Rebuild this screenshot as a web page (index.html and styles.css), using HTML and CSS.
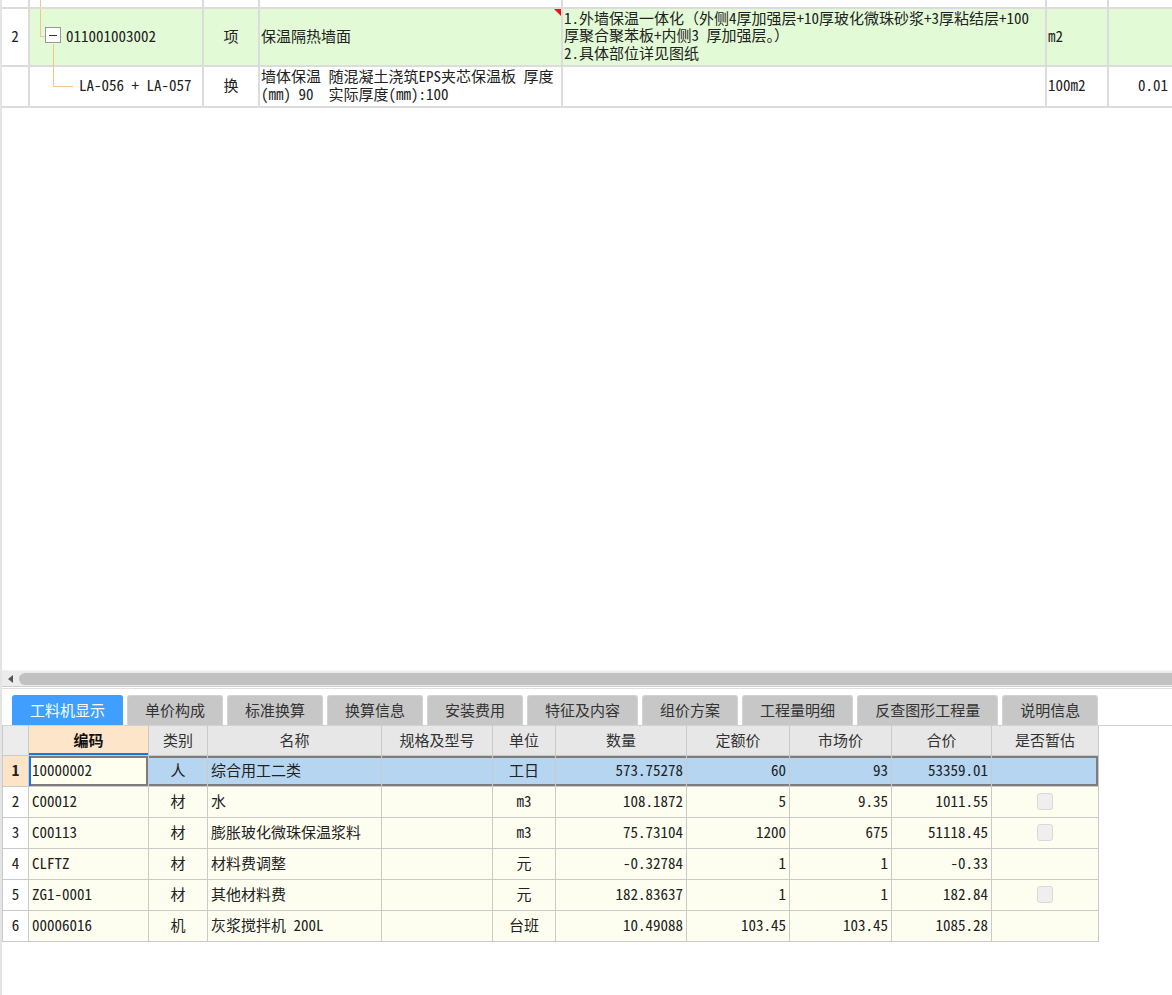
FILE: index.html
```html
<!DOCTYPE html>
<html lang="zh-CN">
<head>
<meta charset="utf-8">
<title>工料机显示</title>
<link rel="stylesheet" href="styles.css">
</head>
<body>
<div class="app">
  <section class="upper">
    <div class="top">
      <div class="c num r0"></div>
      <div class="c tree r0"><span class="tl v0"></span></div>
      <div class="c type r0"></div>
      <div class="c name r0"><span class="peek">实际厚度(mm):80</span></div>
      <div class="c desc r0"></div>
      <div class="c unit r0"></div>
      <div class="c qty r0"></div>

      <div class="c num">2</div>
      <div class="c tree g lvl1"><span class="tl v1"></span><span class="tl h1"></span><span class="tl v2"></span><span class="toggle"></span><span class="code">011001003002</span></div>
      <div class="c type g">项</div>
      <div class="c name g flag">保温隔热墙面</div>
      <div class="c desc g"><div class="ml">1.外墙保温一体化（外侧4厚加强层+10厚玻化微珠砂浆+3厚粘结层+100<br>厚聚合聚苯板+内侧3 厚加强层。）<br>2.具体部位详见图纸</div></div>
      <div class="c unit g">m2</div>
      <div class="c qty g"></div>

      <div class="c num"></div>
      <div class="c tree lvl2"><span class="tl v3"></span><span class="tl h3"></span><span class="code">LA-056 + LA-057</span></div>
      <div class="c type">换</div>
      <div class="c name"><div class="ml">墙体保温 随混凝土浇筑EPS夹芯保温板 厚度<br>(mm) 90  实际厚度(mm):100</div></div>
      <div class="c desc"></div>
      <div class="c unit">100m2</div>
      <div class="c qty">0.01</div>
    </div>
  </section>

  <div class="hscroll"><span class="arrow"></span><span class="thumb"></span></div>
  <div class="sep"></div>

  <section class="lower">
    <nav class="tabs">
      <span class="tab active">工料机显示</span>
      <span class="tab">单价构成</span>
      <span class="tab">标准换算</span>
      <span class="tab">换算信息</span>
      <span class="tab">安装费用</span>
      <span class="tab">特征及内容</span>
      <span class="tab">组价方案</span>
      <span class="tab">工程量明细</span>
      <span class="tab">反查图形工程量</span>
      <span class="tab">说明信息</span>
    </nav>
    <table class="res">
      <colgroup>
        <col class="w1"><col class="w2"><col class="w3"><col class="w4"><col class="w5"><col class="w6"><col class="w7"><col class="w8"><col class="w9"><col class="w10"><col class="w11">
      </colgroup>
      <thead>
        <tr>
          <th class="rn"></th>
          <th class="cur">编码</th>
          <th>类别</th>
          <th>名称</th>
          <th>规格及型号</th>
          <th>单位</th>
          <th>数量</th>
          <th>定额价</th>
          <th>市场价</th>
          <th>合价</th>
          <th>是否暂估</th>
        </tr>
      </thead>
      <tbody>
        <tr class="sel">
          <td class="rn">1</td>
          <td class="code focus">10000002</td>
          <td class="ctr">人</td>
          <td>综合用工二类</td>
          <td></td>
          <td class="ctr">工日</td>
          <td class="n">573.75278</td>
          <td class="n">60</td>
          <td class="n">93</td>
          <td class="n">53359.01</td>
          <td class="last"></td>
        </tr>
        <tr>
          <td class="rn">2</td>
          <td class="code">C00012</td>
          <td class="ctr">材</td>
          <td>水</td>
          <td></td>
          <td class="ctr">m3</td>
          <td class="n">108.1872</td>
          <td class="n">5</td>
          <td class="n">9.35</td>
          <td class="n">1011.55</td>
          <td class="ctr"><span class="chk"></span></td>
        </tr>
        <tr>
          <td class="rn">3</td>
          <td class="code">C00113</td>
          <td class="ctr">材</td>
          <td>膨胀玻化微珠保温浆料</td>
          <td></td>
          <td class="ctr">m3</td>
          <td class="n">75.73104</td>
          <td class="n">1200</td>
          <td class="n">675</td>
          <td class="n">51118.45</td>
          <td class="ctr"><span class="chk"></span></td>
        </tr>
        <tr>
          <td class="rn">4</td>
          <td class="code">CLFTZ</td>
          <td class="ctr">材</td>
          <td>材料费调整</td>
          <td></td>
          <td class="ctr">元</td>
          <td class="n">-0.32784</td>
          <td class="n">1</td>
          <td class="n">1</td>
          <td class="n">-0.33</td>
          <td></td>
        </tr>
        <tr>
          <td class="rn">5</td>
          <td class="code">ZG1-0001</td>
          <td class="ctr">材</td>
          <td>其他材料费</td>
          <td></td>
          <td class="ctr">元</td>
          <td class="n">182.83637</td>
          <td class="n">1</td>
          <td class="n">1</td>
          <td class="n">182.84</td>
          <td class="ctr"><span class="chk"></span></td>
        </tr>
        <tr>
          <td class="rn">6</td>
          <td class="code">00006016</td>
          <td class="ctr">机</td>
          <td>灰浆搅拌机 200L</td>
          <td></td>
          <td class="ctr">台班</td>
          <td class="n">10.49088</td>
          <td class="n">103.45</td>
          <td class="n">103.45</td>
          <td class="n">1085.28</td>
          <td></td>
        </tr>
      </tbody>
    </table>
  </section>
</div>
</body>
</html>
```

FILE: styles.css
```css
* { box-sizing: border-box; }
html, body { margin: 0; padding: 0; }
body {
  width: 1172px;
  height: 995px;
  overflow: hidden;
  background: #fff;
  font-family: "Noto Sans Mono CJK SC", "Noto Sans CJK SC", "Liberation Sans", sans-serif;
  font-size: 15px;
  color: #222;
}
.app {
  height: 995px;
  display: flex;
  flex-direction: column;
  border-left: 2px solid #e4e4e4;
}

/* ---------- upper grid ---------- */
.upper { flex: 0 0 670px; overflow: hidden; }
.top {
  display: grid;
  grid-template-columns: 28px 174px 56px 303px 484px 62px 1fr;
  grid-template-rows: 9px 58px 41px;
}
.top .c {
  border-right: 2px solid #dcdcdc;
  border-bottom: 2px solid #dcdcdc;
  display: flex;
  align-items: center;
  white-space: pre;
  line-height: 17px;
  padding-bottom: 4px;
}
.top .c.r0 { align-items: flex-start; padding-bottom: 0; overflow: hidden; }
.top .qty { border-right: none; justify-content: flex-end; padding-right: 4px; }
.top .g { background: #e2fad6; }
.top .num { justify-content: center; }
.top .type { justify-content: center; }
.top .name { padding-left: 1px; }
.top .desc { padding-left: 1px; }
.top .unit { padding-left: 1px; }
.peek { display: block; margin-top: -18px; padding-left: 1px; color: #555; }
.ml { white-space: pre; line-height: 17.5px; }

.tree { position: relative; }
.tree.lvl1 { padding-left: 15px; }
.tree.lvl2 { padding-left: 49px; }
.tl { position: absolute; background: #f6c489; }
.tl.v0 { left: 10px; top: 0; bottom: -2px; width: 1px; }
.tl.v1 { left: 10px; top: 0; height: 27px; width: 1px; }
.tl.h1 { left: 10px; top: 27px; width: 5px; height: 1px; }
.tl.v2 { left: 23px; top: 35px; bottom: -2px; width: 1px; }
.tl.v3 { left: 23px; top: 0; height: 19px; width: 1px; }
.tl.h3 { left: 23px; top: 19px; width: 20px; height: 1px; }
.toggle {
  width: 16px;
  height: 16px;
  border: 1px solid #999;
  background: #fff;
  display: flex;
  align-items: center;
  justify-content: center;
  flex: none;
}
.toggle::before { content: ""; width: 8px; height: 1px; background: #333; }
.tree .code { margin-left: 5px; }
.tree.lvl2 .code { margin-left: 0; }
.flag { position: relative; }
.flag::after {
  content: "";
  position: absolute;
  top: 0;
  right: 0;
  border-top: 7px solid #e8141b;
  border-left: 7px solid transparent;
}

/* ---------- scrollbar ---------- */
.hscroll {
  flex: 0 0 16px;
  background: #ececec;
  border-top: 1px solid #f4f4f4;
  display: flex;
  align-items: center;
  padding-left: 6px;
  overflow: hidden;
}
.arrow {
  width: 0;
  height: 0;
  border-right: 5px solid #555;
  border-top: 4px solid transparent;
  border-bottom: 4px solid transparent;
  flex: none;
}
.thumb {
  flex: none;
  width: 1200px;
  height: 12px;
  margin-left: 6px;
  border-radius: 6px;
  background: #c1c1c1;
}
.sep {
  flex: 0 0 3px;
  border-top: 1px solid #cfcfcf;
  border-bottom: 1px solid #dedede;
}

/* ---------- lower ---------- */
.lower { flex: 1; padding-top: 6px; }
.tabs {
  display: flex;
  gap: 4px;
  padding-left: 10px;
  height: 31px;
  border-bottom: 1px solid #d2d2d2;
}
.tab {
  height: 30px;
  padding: 0 17px 2px;
  display: flex;
  align-items: center;
  font-family: "Noto Sans CJK SC", sans-serif;
  font-size: 15px;
  color: #333;
  background: #c7c7c7;
  border: 1px solid #d3d3d3;
  border-bottom: none;
  border-radius: 3px 3px 0 0;
}
.tab.active { background: #409eff; border-color: #409eff; color: #fff; }

.res {
  border-collapse: separate;
  border-spacing: 0;
  table-layout: fixed;
  width: 1097px;
  border-left: 1px solid #cacaca;
}
.w1 { width: 26px; }
.w2 { width: 120px; }
.w3 { width: 59px; }
.w4 { width: 174px; }
.w5 { width: 111px; }
.w6 { width: 63px; }
.w7 { width: 131px; }
.w8 { width: 103px; }
.w9 { width: 102px; }
.w10 { width: 100px; }
.w11 { width: 107px; }
.res th, .res td {
  border-right: 1px solid #cacaca;
  border-bottom: 1px solid #cacaca;
  padding: 0 3px 3px;
  white-space: nowrap;
  overflow: hidden;
  vertical-align: middle;
  line-height: 17px;
}
.res thead tr { height: 30px; }
.res tbody tr { height: 31px; }
.res th {
  background: #e7e7e7;
  font-weight: normal;
  font-family: "Noto Sans CJK SC", sans-serif;
  color: #333;
  text-align: center;
}
.res th.rn { background: #ececec; }
.res th.cur { background: #fde5c9; font-weight: bold; color: #111; box-shadow: inset 0 -2px 0 #1677e5; }
.res td { background: #fefef0; }
.res td.rn { background: #fff; text-align: center; padding: 0 0 3px; }
.res td.ctr { text-align: center; }
.res td.n { text-align: right; }
.res tr.sel td { background: #b5d5f1; box-shadow: inset 0 2px 0 #7d7d7d, inset 0 -2px 0 #7d7d7d; }
.res tr.sel td.rn { background: #fde4c6; font-weight: bold; box-shadow: none; }
.res tr.sel td.focus {
  background: #fffff0;
  box-shadow: inset 2px 0 0 #1677e5, inset 0 2px 0 #7d7d7d, inset 0 -2px 0 #7d7d7d, inset -2px 0 0 #7d7d7d;
}
.res tr.sel td.last { box-shadow: inset 0 2px 0 #7d7d7d, inset 0 -2px 0 #7d7d7d, inset -2px 0 0 #7d7d7d; }
.res td .chk {
  display: inline-block;
  width: 16px;
  height: 17px;
  vertical-align: middle;
  background: #efefef;
  border: 1px solid #d9d9d9;
  border-radius: 3px;
}
```
